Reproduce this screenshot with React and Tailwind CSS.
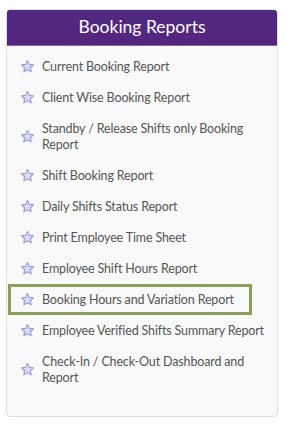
import React from 'react';

const reports = [
  'Current Booking Report',
  'Client Wise Booking Report',
  'Standby / Release Shifts only Booking Report',
  'Shift Booking Report',
  'Daily Shifts Status Report',
  'Print Employee Time Sheet',
  'Employee Shift Hours Report',
  'Booking Hours and Variation Report',
  'Employee Verified Shifts Summary Report',
  'Check-In / Check-Out Dashboard and Report',
];

const Star = () => (
  <svg width="15" height="15" viewBox="0 0 24 24" className="shrink-0">
    <path
      d="M12 2.5l2.9 6.1 6.6.8-4.9 4.6 1.3 6.6L12 17.3l-5.9 3.3 1.3-6.6-4.9-4.6 6.6-.8z"
      fill="#dcdcf6"
      stroke="#9a9ae0"
      strokeWidth="1.8"
      strokeLinejoin="round"
    />
  </svg>
);

const App = () => {
  return (
    <div className="w-[286px] h-[429px] bg-white pt-[9px] pl-[6px]" style={{ fontFamily: 'Lato, "Open Sans", sans-serif' }}>
      <div className="w-[272px] h-[408px] rounded-[4px] border border-[#dedede] bg-[#f9f9f9] overflow-hidden">
        <div className="h-[36px] bg-gradient-to-b from-[#4e2a7e] to-[#552580] border-b border-[#8a6aa8] flex items-center justify-center">
          <h1 className="text-white text-[17.5px]">Booking Reports</h1>
        </div>
        <ul className="pt-[5px]">
          {reports.map((r, i) => (
            <li
              key={r}
              className={
                i === 7
                  ? 'ml-[1px] mr-[25px] border-[3px] border-[#8aa05a] flex items-center gap-[7px] pl-[9px] pr-[2px] py-[4.5px] text-[12.5px] tracking-[-0.15px] leading-[16px] text-[#555]'
                  : 'flex items-center gap-[7px] pl-[13px] pr-[2px] py-[7.5px] text-[12.5px] tracking-[-0.15px] leading-[16px] text-[#555]'
              }
            >
              <Star />
              <span>{r}</span>
            </li>
          ))}
        </ul>
      </div>
    </div>
  );
};

export default App;
